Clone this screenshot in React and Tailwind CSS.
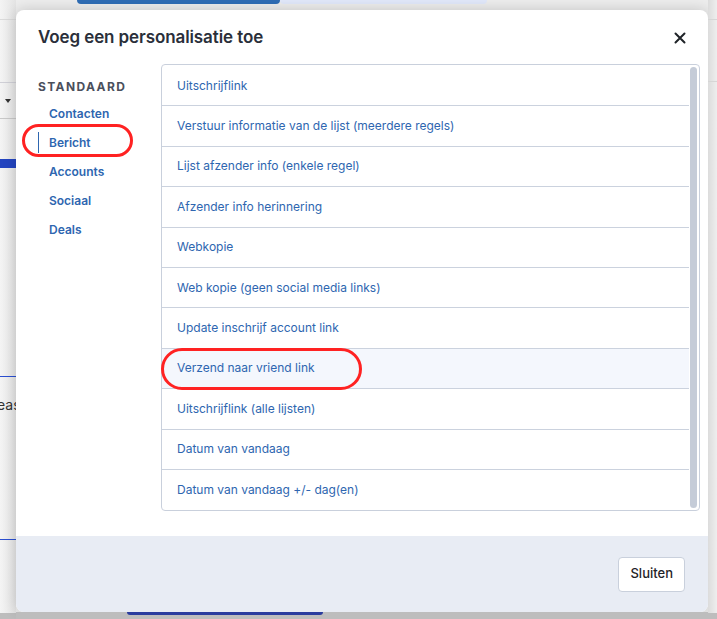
import React from "react";

const rows = [
  "Uitschrijflink",
  "Verstuur informatie van de lijst (meerdere regels)",
  "Lijst afzender info (enkele regel)",
  "Afzender info herinnering",
  "Webkopie",
  "Web kopie (geen social media links)",
  "Update inschrijf account link",
  "Verzend naar vriend link",
  "Uitschrijflink (alle lijsten)",
  "Datum van vandaag",
  "Datum van vandaag +/- dag(en)",
];

const nav = ["Contacten", "Bericht", "Accounts", "Sociaal", "Deals"];

export default function App() {
  return (
    <div
      className="relative w-full h-[619px] overflow-hidden bg-[#ededed] flex"
      style={{ fontFamily: "Inter, 'Noto Sans', sans-serif" }}
    >
      {/* page behind the dialog: left edge */}
      <div className="w-[16px] shrink-0 flex flex-col overflow-hidden bg-gradient-to-r from-[#f4f4f4] to-[#e4e4e4]">
        <div className="h-[20px] border-b border-[#dadada]" />
        <div className="h-[63px] border-b border-[#cfcfd6]" />
        <div className="h-[36px] border-b border-[#c8c8c8] flex items-center justify-center">
          <div className="w-0 h-0 border-l-[3px] border-r-[3px] border-t-[4px] border-l-transparent border-r-transparent border-t-[#333]" />
        </div>
        <div className="mt-[40px] h-[9px] bg-[#2445c0]" />
        <div className="mt-[208px] h-px bg-[#2b4fd0]" />
        <div className="mt-[17px] h-[20px] flex items-center text-[14px] text-[#333] whitespace-nowrap">
          <span className="-ml-[3px]">eas</span>
        </div>
        <div className="mt-[125px] h-px bg-[#2b4fd0]" />
        <div className="mt-auto h-[6px] bg-[#bdbdbd]" />
      </div>

      {/* dialog column */}
      <div className="w-[692px] shrink-0 flex flex-col">
        <div className="h-[10px] flex">
          <div className="ml-[61px] w-[203px] h-[4px] bg-[#2f6db5] rounded-b-sm" />
          <div className="w-[207px] h-[4px] bg-[#e1e8fa] rounded-b-sm" />
        </div>

        <div className="h-[602px] bg-white rounded-lg overflow-hidden flex flex-col shadow-[0_0_14px_rgba(0,0,0,0.18)]">
          <div className="h-[55px] flex items-center justify-between pl-[22px] pr-[20px]">
            <h2 className="text-[17px] font-semibold text-[#2a2f3a] tracking-[-0.1px]">
              Voeg een personalisatie toe
            </h2>
            <svg width="12" height="12" viewBox="0 0 12 12" className="mr-[2px]">
              <path d="M1.5 1.5 L10.5 10.5 M10.5 1.5 L1.5 10.5" stroke="#1f2328" strokeWidth="2" strokeLinecap="round" />
            </svg>
          </div>

          <div className="flex -mt-px">
            <div className="w-[145px] pl-[22px] pt-[16px]">
              <div className="h-[14px] flex items-center text-[12px] font-bold tracking-[1.4px] text-[#4a4f5c]">
                STANDAARD
              </div>
              <div className="mt-[5px]">
                {nav.map((n) => (
                  <div key={n} className="h-[29px] flex items-center">
                    <div
                      className={
                        "h-[21px] flex items-center pl-[10px] border-l text-[12px] font-semibold text-[#2e66b0] " +
                        (n === "Bericht" ? "border-[#2e66b0]" : "border-transparent")
                      }
                    >
                      {n}
                    </div>
                  </div>
                ))}
              </div>
            </div>

            <div className="w-[539px] h-[447px] border border-[#c9d0dc] rounded flex">
              <div className="flex-1 pt-px">
                {rows.map((r, i) => (
                  <div
                    key={r}
                    className={
                      "h-[40.4px] flex items-center pl-[15px] text-[12px] text-[#2e66b0] " +
                      (i < rows.length - 1 ? "border-b border-[#cbd2de] " : "") +
                      (r === "Verzend naar vriend link" ? "bg-[#f4f7fd]" : "")
                    }
                  >
                    {r}
                  </div>
                ))}
              </div>
              <div className="w-[10px] pl-px pr-[2px] py-[2px]">
                <div className="w-full h-full rounded-full bg-[#c5ccd8]" />
              </div>
            </div>
          </div>

          <div className="mt-auto h-[76px] bg-[#e8ecf4] flex items-center justify-end pr-[23px]">
            <button className="h-[35px] px-[11px] bg-white border border-[#c9d0dc] rounded text-[13px] font-medium text-[#1f2328]">
              Sluiten
            </button>
          </div>
        </div>

        <div className="flex-1 bg-[#bdbdbd] flex">
          <div className="ml-[111px] w-[196px] h-[3px] bg-[#2a3c9e] rounded-b" />
        </div>
      </div>

      {/* page behind the dialog: right edge */}
      <div className="flex-1 flex flex-col bg-gradient-to-r from-[#dcdcdc] to-[#eeeeee]">
        <div className="h-[20px] border-b border-[#d6d6d6]" />
        <div className="h-[62px] border-b border-[#d6d6d6]" />
        <div className="mt-auto h-[6px] bg-[#bdbdbd]" />
      </div>

      {/* annotations drawn over the screenshot */}
      <div className="absolute left-[22px] top-[124px] w-[111px] h-[33px] rounded-full border-[3px] border-[#ff2222]" />
      <div className="absolute left-[161px] top-[348px] w-[201px] h-[42px] rounded-full border-[3px] border-[#ff2222]" />
    </div>
  );
}
